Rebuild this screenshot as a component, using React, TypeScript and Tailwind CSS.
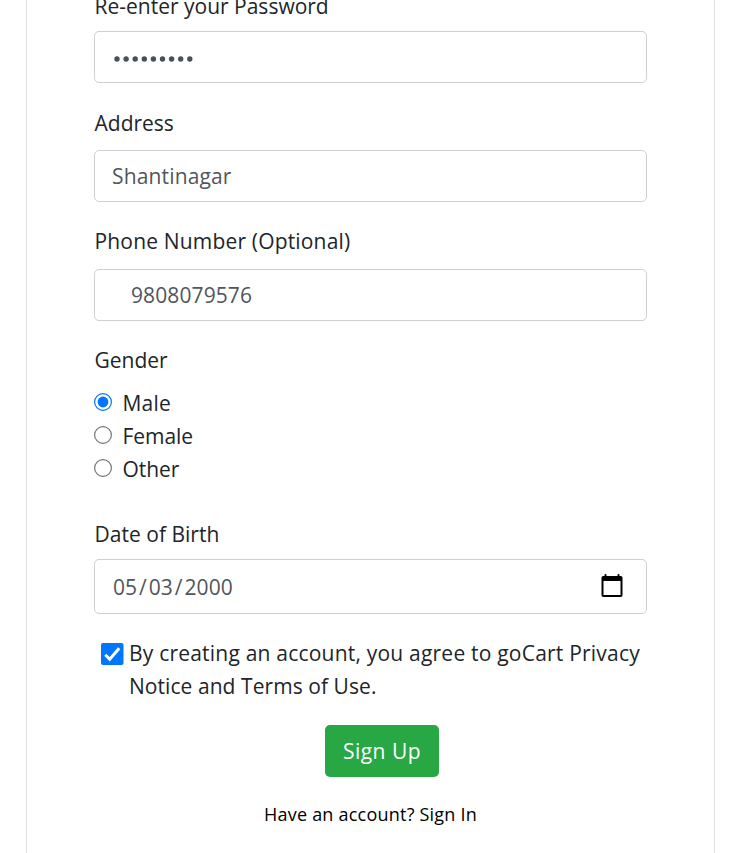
import type { ReactNode } from "react";

function Label({ children, className = "" }: { children: ReactNode; className?: string }) {
  return <div className={`h-[33px] pt-px pl-[0.5px] whitespace-nowrap ${className}`}>{children}</div>;
}

function Field({ children, className = "" }: { children: ReactNode; className?: string }) {
  return (
    <div
      className={`flex w-[553px] items-center rounded-[5px] border border-[#ced0d3] bg-white whitespace-nowrap text-[#50565c] ${className}`}
    >
      {children}
    </div>
  );
}

function Radio({ checked = false }: { checked?: boolean }) {
  return (
    <svg className="-mt-[3px] mr-[10.5px] h-[18px] w-[18px] shrink-0" viewBox="0 0 18 18" fill="none">
      <circle cx="9" cy="9" r="8.4" stroke={checked ? "#0075ff" : "#767676"} strokeWidth="1.2" />
      {checked && <circle cx="9" cy="9" r="5.4" fill="#0075ff" />}
    </svg>
  );
}

function Option({ text, checked, className }: { text: string; checked?: boolean; className: string }) {
  return (
    <div className="flex h-[33px] items-center">
      <Radio checked={checked} />
      <span className={className}>{text}</span>
    </div>
  );
}

export default function App() {
  return (
    <div className="h-[853px] w-[739px] overflow-hidden bg-white pl-[26px] font-['Open_Sans','Noto_Sans',sans-serif] text-[21px] leading-[33px] font-[370] text-[#212529]">
      <div className="flow-root h-full w-[689px] border-x border-[#dfdfdf] pl-[67px]">
        <Label className="-mt-[11px]">Re-enter your Password</Label>
        <Field className="mt-[9px] h-[52px] pl-[18.5px]">
          <svg className="mt-[3px] h-[6px] w-[82px]" viewBox="0 0 82 6" fill="#495057">
            {[0, 1, 2, 3, 4, 5, 6, 7, 8].map((i) => (
              <circle key={i} cx={3 + i * 9.1} cy="3" r="2.7" />
            ))}
          </svg>
        </Field>
        <Label className="mt-[23px]">Address</Label>
        <Field className="mt-[11px] h-[52px] pl-[17px] tracking-[0.15px]">Shantinagar</Field>
        <Label className="mt-[22px] tracking-[0.17px]">Phone Number (Optional)</Label>
        <Field className="mt-[12px] h-[52px] pl-[36px] tracking-[0.1px]">9808079576</Field>
        <Label className="mt-[22px]">Gender</Label>
        <div className="mt-[11px]">
          <Option text="Male" checked className="tracking-[0.2px]" />
          <Option text="Female" className="tracking-[-0.05px]" />
          <Option text="Other" className="tracking-[-0.05px]" />
        </div>
        <Label className="mt-[31px] tracking-[0.02px]">Date of Birth</Label>
        <Field className="mt-[9px] h-[55px] justify-between pr-[23px] pl-[18px]">
          <span className="flex pt-px">
            <span>05</span>
            <span className="mx-[2px]">/</span>
            <span>03</span>
            <span className="mx-[2px]">/</span>
            <span className="tracking-[0.1px]">2000</span>
          </span>
          <svg className="-mt-[3px] h-[23px] w-[22px]" viewBox="0 0 22 23">
            <path
              fill="#000"
              fillRule="evenodd"
              d="M3.5 1a1 1 0 0 1 2 0v1h11V1a1 1 0 0 1 2 0v1H19.8a1.7 1.7 0 0 1 1.7 1.7v17.6a1.7 1.7 0 0 1-1.7 1.7H2.2a1.7 1.7 0 0 1-1.7-1.7V3.7A1.7 1.7 0 0 1 2.2 2h1.3zM2.5 7v14h17V7z"
            />
          </svg>
        </Field>
        <div className="mt-[23px] flex pl-[7px]">
          <svg className="mt-[6px] mr-[5px] h-[22px] w-[23px] shrink-0" viewBox="0 0 23 22" fill="none">
            <rect width="22.5" height="22" rx="2" fill="#0075ff" />
            <path d="M4.3 11.7l4.4 4.5L18.2 5.3" stroke="#fff" strokeWidth="3" />
          </svg>
          <div className="whitespace-nowrap">
            <div className="tracking-[0.21px]">By creating an account, you agree to goCart Privacy</div>
            <div className="tracking-[0.06px]">Notice and Terms of Use.</div>
          </div>
        </div>
        <button className="mt-[22px] ml-[231px] flex h-[52px] w-[114px] items-center justify-center rounded-[5px] bg-[#28a745] pt-px tracking-[0.5px] whitespace-nowrap text-white">
          Sign Up
        </button>
        <div className="mt-[21px] ml-[170px] text-[18px] tracking-[0.22px] whitespace-nowrap text-black">
          Have an account? Sign In
        </div>
      </div>
    </div>
  );
}
